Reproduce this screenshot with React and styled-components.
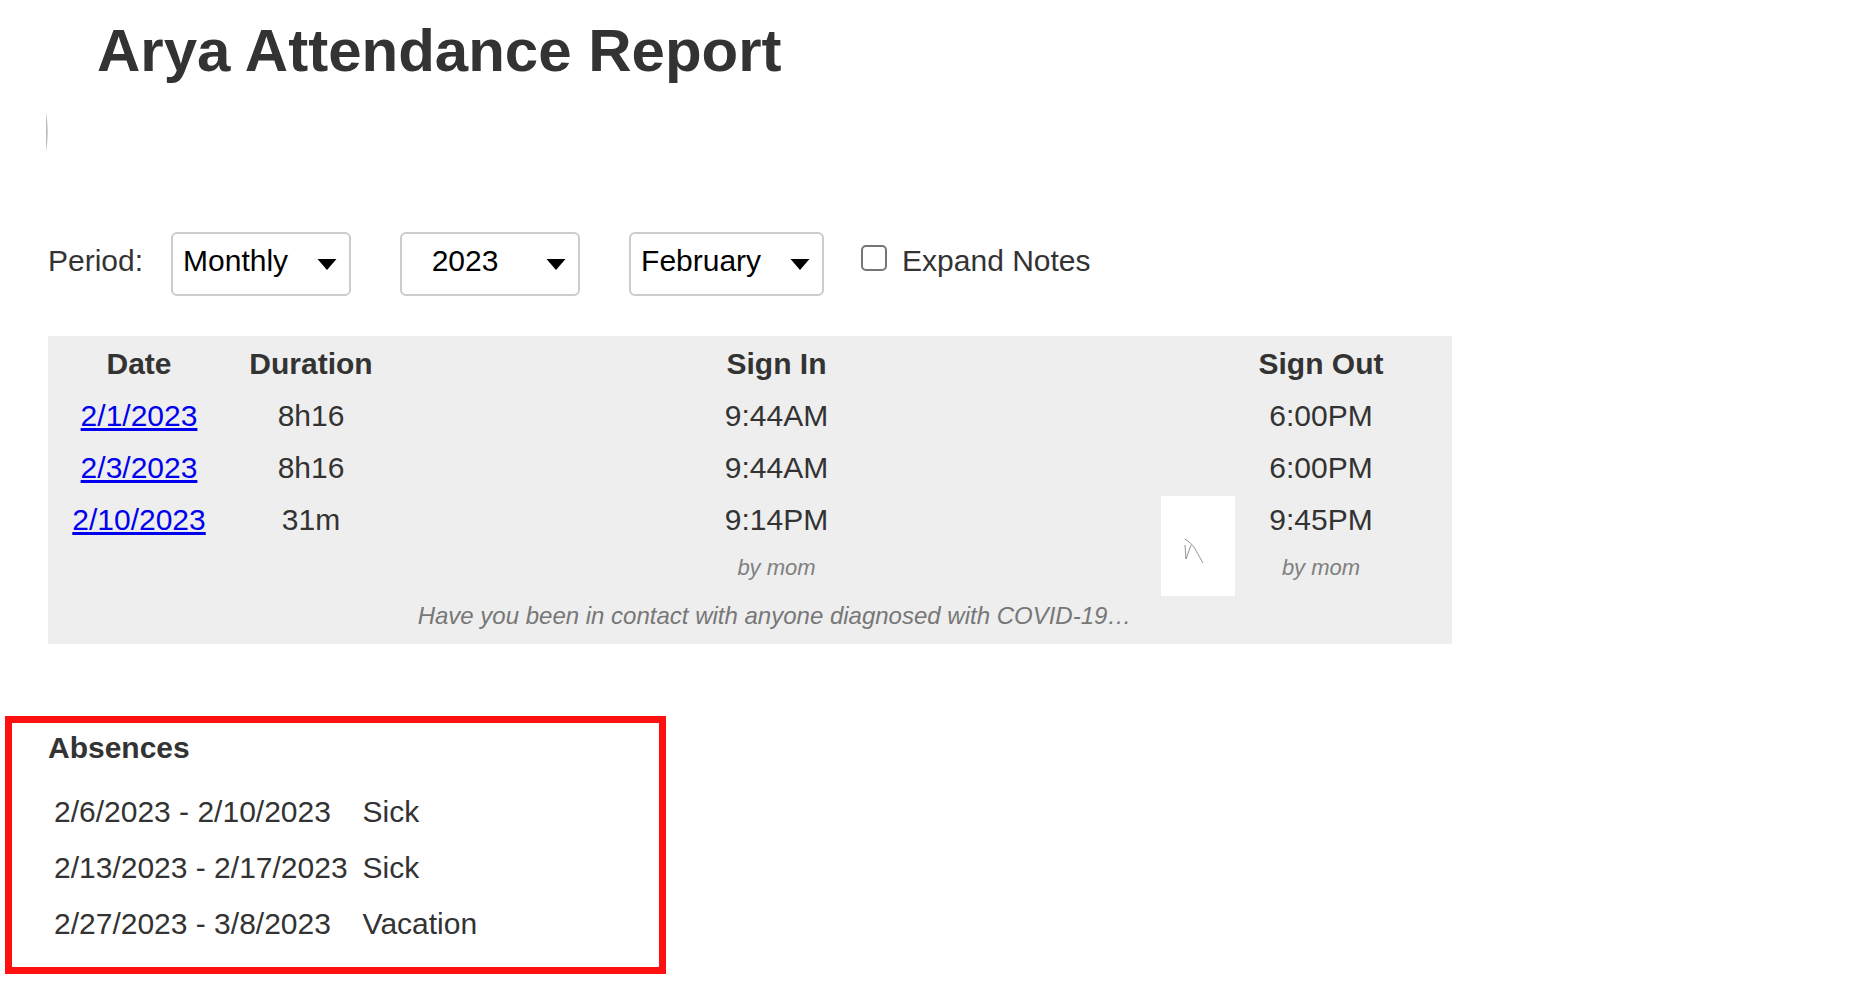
import React, { useState } from 'react'
import styled, { createGlobalStyle } from 'styled-components'

const records = [
  { date: '2/1/2023', duration: '8h16', signIn: '9:44AM', signOut: '6:00PM' },
  { date: '2/3/2023', duration: '8h16', signIn: '9:44AM', signOut: '6:00PM' },
  {
    date: '2/10/2023',
    duration: '31m',
    signIn: '9:14PM',
    signOut: '9:45PM',
    by: 'by mom',
    note: 'Have you been in contact with anyone diagnosed with COVID-19…',
  },
]

const absences = [
  { range: '2/6/2023 - 2/10/2023', reason: 'Sick' },
  { range: '2/13/2023 - 2/17/2023', reason: 'Sick' },
  { range: '2/27/2023 - 3/8/2023', reason: 'Vacation' },
]

const Dropdown = ({ label, options, width, center }) => {
  const [value, setValue] = useState(options[0])

  return (
    <SelectBox $width={width}>
      <Select
        aria-label={label}
        value={value}
        $center={center}
        onChange={(e) => setValue(e.target.value)}
      >
        {options.map((option) => (
          <option key={option}>{option}</option>
        ))}
      </Select>
      <Arrow viewBox="0 0 20 12" aria-hidden="true">
        <path d="M0.5 1H19.5L10 12Z" fill="#000" />
      </Arrow>
    </SelectBox>
  )
}

const Signature = () => (
  <SignatureImage viewBox="0 0 74 100" role="img" aria-label="Signature">
    <path
      d="M24 43C33 49 34 53 38 60L42 67"
      fill="none"
      stroke="#777"
      strokeWidth="0.8"
    />
    <path
      d="M24 49L25 63L30 49"
      fill="none"
      stroke="#777"
      strokeWidth="0.8"
    />
  </SignatureImage>
)

const RecordRows = ({ record }) => (
  <>
    <tr>
      <Cell>
        <a href="#day">{record.date}</a>
      </Cell>
      <Cell>{record.duration}</Cell>
      <Cell>{record.signIn}</Cell>
      {record.by ? (
        <SignatureCell rowSpan={3}>
          <Signature />
        </SignatureCell>
      ) : (
        <Cell />
      )}
      <Cell>{record.signOut}</Cell>
    </tr>
    {record.by && (
      <tr>
        <ByCell colSpan={2} />
        <ByCell>{record.by}</ByCell>
        <ByCell>{record.by}</ByCell>
      </tr>
    )}
    {record.note && (
      <tr>
        <NoteCell colSpan={2} />
        <NoteCell>{record.note}</NoteCell>
        <NoteCell />
      </tr>
    )}
  </>
)

const App = () => {
  const [expanded, setExpanded] = useState(false)

  return (
    <Page>
      <GlobalStyle />
      <Title>Arya Attendance Report</Title>
      <Avatar viewBox="0 0 4 40" aria-hidden="true">
        <path d="M0 0Q3.4 20 0 40Z" fill="#bbb" />
      </Avatar>

      <Filters>
        <FilterLabel>Period:</FilterLabel>
        <Dropdown label="Period" options={['Monthly', 'Weekly', 'Yearly']} width={180} />
        <Dropdown label="Year" options={['2023', '2022', '2021']} width={180} center />
        <Dropdown label="Month" options={['February', 'January', 'March']} width={195} />
        <CheckLabel>
          <Checkbox
            type="checkbox"
            checked={expanded}
            onChange={(e) => setExpanded(e.target.checked)}
          />
          Expand Notes
        </CheckLabel>
      </Filters>

      <Report>
        <colgroup>
          <Col $width={182} />
          <Col $width={162} />
          <Col />
          <Col $width={74} />
          <Col $width={217} />
        </colgroup>
        <thead>
          <tr>
            <Cell as="th">Date</Cell>
            <Cell as="th">Duration</Cell>
            <Cell as="th">Sign In</Cell>
            <Cell />
            <Cell as="th">Sign Out</Cell>
          </tr>
        </thead>
        <tbody>
          {records.map((record) => (
            <RecordRows key={record.date} record={record} />
          ))}
        </tbody>
      </Report>

      <Absences>
        <h2>Absences</h2>
        <table>
          <tbody>
            {absences.map((absence) => (
              <tr key={absence.range}>
                <td>{absence.range}</td>
                <td>{absence.reason}</td>
              </tr>
            ))}
          </tbody>
        </table>
      </Absences>
    </Page>
  )
}

const GlobalStyle = createGlobalStyle`
  * {
    box-sizing: border-box;
  }

  body {
    margin: 0;
    background: #fff;
    color: #333;
    font-family: "Liberation Sans", Arial, Helvetica, sans-serif;
    font-size: 30px;
    line-height: 36px;
  }

  a {
    color: #0000ee;
  }
`

const Page = styled.main`
  padding: 15px 0 20px;
`

const Title = styled.h1`
  margin: 0 0 0 97px;
  font-size: 60px;
  line-height: 72px;
`

/* edge of the round profile picture */
const Avatar = styled.svg`
  display: block;
  width: 4px;
  height: 40px;
  margin: 25px 0 80px 46px;
`

const Filters = styled.div`
  display: flex;
  flex-wrap: wrap;
  margin: 0 48px 40px;
`

const FilterLabel = styled.span`
  margin-right: 28px;
  padding: 11px 0;
`

const SelectBox = styled.div`
  display: grid;
  width: ${({ $width }) => $width}px;
  height: 64px;
  margin-right: 49px;

  & + label {
    margin-left: -12px;
  }
`

const Select = styled.select`
  grid-area: 1 / 1;
  width: 100%;
  height: 64px;
  padding: 0 10px 6px;
  padding-right: ${({ $center }) => ($center ? '60px' : '40px')};
  border: 2px solid #ccc;
  border-radius: 6px;
  appearance: none;
  background: #fff;
  color: #000;
  font: inherit;
  text-align: ${({ $center }) => ($center ? 'center' : 'left')};
`

const Arrow = styled.svg`
  grid-area: 1 / 1;
  z-index: 1;
  align-self: center;
  justify-self: end;
  width: 20px;
  height: 12px;
  margin-right: 14px;
  pointer-events: none;
`

const CheckLabel = styled.label`
  display: flex;
  align-items: flex-start;
  gap: 15px;
  padding: 11px 0;
`

const Checkbox = styled.input`
  width: 26px;
  height: 26px;
  margin: 2px 0 0;
  border: 2px solid #767676;
  border-radius: 5px;
  appearance: none;
  background: #fff;

  &:checked {
    background: #0075ff;
  }
`

const Report = styled.table`
  width: calc(100% - 96px);
  max-width: 1404px;
  margin: 0 48px 72px;
  padding: 2px 0;
  border-spacing: 0;
  table-layout: fixed;
  background: #eee;
`

const Col = styled.col`
  width: ${({ $width }) => ($width ? `${$width}px` : 'auto')};
`

const Cell = styled.td`
  padding: 8px 0;
  text-align: center;

  &:last-child {
    padding-right: 45px;
  }
`

const ByCell = styled(Cell)`
  height: 44px;
  padding: 0;
  color: #808080;
  font-size: 22px;
  font-style: italic;
`

const NoteCell = styled(Cell)`
  height: 52px;
  padding: 0 4px 0 0;
  color: #777;
  font-size: 24px;
  font-style: italic;
`

const SignatureCell = styled.td`
  padding: 2px 0 0;
  vertical-align: top;
`

const SignatureImage = styled.svg`
  display: block;
  width: 74px;
  height: 100px;
  background: #fff;
`

const Absences = styled.section`
  width: fit-content;
  min-width: 661px;
  margin-left: 5px;
  padding: 7px 36px 15px;
  border: 7px solid #ff1010;

  h2 {
    margin: 0 0 18px;
    font-size: 30px;
  }

  table {
    margin-left: 6px;
    border-spacing: 0;
  }

  td {
    padding: 10px 15px 10px 0;
  }
`

export default App
